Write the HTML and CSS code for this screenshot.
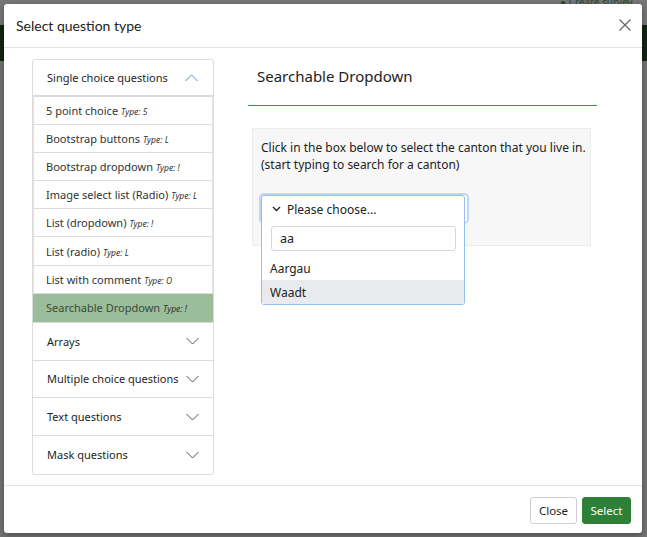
FILE: index.html
```html
<!DOCTYPE html>
<html>
<head>
<meta charset="utf-8">
<link rel="stylesheet" href="styles.css">
</head>
<body>
<div class="backdrop">
  <div class="bg-top"><span class="bg-create">● Create survey</span></div>
  <div class="bg-band"></div>
</div>
<div class="modal">
  <div class="modal-header">
    <div class="modal-title">Select question type</div>
    <svg class="close-x" width="12" height="12" viewBox="0 0 12 12"><path d="M0.5 0.5L11.5 11.5M11.5 0.5L0.5 11.5" stroke="#666" stroke-width="1.2" fill="none"/></svg>
  </div>
  <div class="modal-body">
    <div class="accordion">
      <div class="acc-head open">
        <span>Single choice questions</span>
        <svg class="chev" width="13" height="8" viewBox="0 0 13 8"><path d="M0.5 7L6.5 1L12.5 7" stroke="#4f88d8" stroke-width="1" fill="none"/></svg>
      </div>
      <div class="acc-items">
        <div class="item">5 point choice <i>Type: 5</i></div>
        <div class="item">Bootstrap buttons <i>Type: L</i></div>
        <div class="item">Bootstrap dropdown <i>Type: !</i></div>
        <div class="item">Image select list (Radio) <i>Type: L</i></div>
        <div class="item">List (dropdown) <i>Type: !</i></div>
        <div class="item">List (radio) <i>Type: L</i></div>
        <div class="item">List with comment <i>Type: O</i></div>
        <div class="item active">Searchable Dropdown <i>Type: !</i></div>
      </div>
      <div class="acc-head">
        <span>Arrays</span>
        <svg class="chev" width="13" height="8" viewBox="0 0 13 8"><path d="M0.5 1L6.5 7L12.5 1" stroke="#555" stroke-width="1" fill="none"/></svg>
      </div>
      <div class="acc-head">
        <span>Multiple choice questions</span>
        <svg class="chev" width="13" height="8" viewBox="0 0 13 8"><path d="M0.5 1L6.5 7L12.5 1" stroke="#555" stroke-width="1" fill="none"/></svg>
      </div>
      <div class="acc-head">
        <span>Text questions</span>
        <svg class="chev" width="13" height="8" viewBox="0 0 13 8"><path d="M0.5 1L6.5 7L12.5 1" stroke="#555" stroke-width="1" fill="none"/></svg>
      </div>
      <div class="acc-head last">
        <span>Mask questions</span>
        <svg class="chev" width="13" height="8" viewBox="0 0 13 8"><path d="M0.5 1L6.5 7L12.5 1" stroke="#555" stroke-width="1" fill="none"/></svg>
      </div>
    </div>
    <div class="preview">
      <div class="preview-title">Searchable Dropdown</div>
      <div class="green-line"></div>
      <div class="question">
        <div class="q-text">Click in the box below to select the canton that you live in.<br>(start typing to search for a canton)</div>
        <div class="select-wrap">
          <div class="select-box"></div>
          <div class="dropdown">
            <div class="dd-head">
              <svg width="9" height="6" viewBox="0 0 9 6"><path d="M1 1L4.5 4.5L8 1" stroke="#222" stroke-width="1.4" fill="none"/></svg>
              <span>Please choose...</span>
            </div>
            <div class="dd-search">aa</div>
            <div class="dd-opt">Aargau</div>
            <div class="dd-opt hl">Waadt</div>
          </div>
        </div>
      </div>
    </div>
  </div>
  <div class="modal-footer">
    <button class="btn btn-close">Close</button>
    <button class="btn btn-select">Select</button>
  </div>
</div>
</body>
</html>
```

FILE: styles.css
```css
html, body {
  margin: 0;
  padding: 0;
}
body {
  width: 647px;
  height: 537px;
  overflow: hidden;
  background: #737373;
  font-family: "Noto Sans", "Open Sans", sans-serif;
  position: relative;
}
.backdrop {
  position: absolute;
  left: 0;
  top: 0;
  width: 647px;
  height: 537px;
}
.bg-top {
  height: 25px;
  background: #777;
  position: relative;
}
.bg-create {
  position: absolute;
  left: 560px;
  top: -4px;
  font-size: 10px;
  line-height: 12px;
  color: #2a4a2a;
}
.bg-band {
  height: 36px;
  background: #122412;
}
.modal {
  position: absolute;
  left: 4px;
  top: 4px;
  width: 638px;
  height: 529px;
  background: #fff;
  border-radius: 3px;
  box-shadow: 0 2px 6px rgba(0,0,0,0.35);
  display: flex;
  flex-direction: column;
}
.modal-header {
  height: 43px;
  border-bottom: 1px solid #e3e3e3;
  display: flex;
  align-items: center;
  justify-content: space-between;
  padding: 0 11px 0 12px;
  flex: none;
}
.modal-title {
  font-size: 14px;
  color: #222;
  font-family: "Lato", "Noto Sans", sans-serif;
  margin-top: -1px;
}
.close-x {
  margin-top: -2px;
}
.modal-body {
  flex: 1;
  display: flex;
  padding: 11px 0 0 28px;
}
.accordion {
  width: 180px;
  border: 1px solid #dcdcdc;
  border-radius: 3px;
  flex: none;
  display: flex;
  flex-direction: column;
  align-self: flex-start;
}
.acc-head {
  height: 37.75px;
  display: flex;
  align-items: center;
  justify-content: space-between;
  padding: 0 14px 0 14px;
  font-size: 11px;
  color: #1e1e1e;
  border-bottom: 1px solid #dcdcdc;
  box-sizing: border-box;
  flex: none;
}
.acc-head.open {
  height: 37px;
  border-bottom: 2px solid #dadada;
}
.acc-head.open .chev {
  margin-right: 1px;
}
.acc-head.last {
  border-bottom: none;
}
.acc-items {
  display: flex;
  flex-direction: column;
  border-bottom: 1px solid #dcdcdc;
}
.item {
  height: 28.1px;
  box-sizing: border-box;
  border-left: 1px solid #e4e4e4;
  border-right: 1px solid #e4e4e4;
  border-bottom: 1px solid #dcdcdc;
  padding-left: 12px;
  display: flex;
  align-items: center;
  font-size: 11px;
  color: #333;
  white-space: nowrap;
  gap: 3px;
}
.item:last-child {
  border-bottom: none;
}
.item i {
  font-size: 8.5px;
  color: #333;
  margin-top: 2px;
}
.item.active {
  background: #9cbd9b;
  border-color: #9cbd9b;
  color: #3a4a3a;
}
.preview {
  margin-left: 34px;
  width: 349px;
  display: flex;
  flex-direction: column;
}
.preview-title {
  font-size: 15px;
  color: #222;
  padding-left: 9px;
  padding-top: 7px;
  height: 39px;
  box-sizing: content-box;
  flex: none;
}
.green-line {
  height: 1px;
  flex: none;
  background: #2f9a33;
}
.question {
  margin: 22px 6px 0 4px;
  background: #f7f7f7;
  border: 1px solid #ececec;
  height: 118px;
  padding: 10px 0 0 8px;
  box-sizing: border-box;
}
.q-text {
  font-size: 12px;
  line-height: 17px;
  color: #222;
  white-space: nowrap;
}
.select-wrap {
  position: relative;
  margin-top: 22px;
  height: 28px;
}
.select-box {
  width: 206px;
  height: 27px;
  border-radius: 3px;
  background: #fff;
  box-shadow: 0 0 0 2px #c0d6f5;
}
.dropdown {
  position: absolute;
  left: 0;
  top: 0;
  width: 204px;
  height: 110px;
  box-sizing: border-box;
  background: #fff;
  border: 1px solid #93bdf5;
  border-radius: 3px;
  display: flex;
  flex-direction: column;
}
.dd-head {
  height: 26px;
  display: flex;
  align-items: center;
  gap: 6px;
  padding-left: 10px;
  font-size: 12px;
  color: #222;
}
.dd-search {
  margin: 4px 8px 0 9px;
  height: 25px;
  box-sizing: border-box;
  border: 1px solid #d6d6d6;
  border-radius: 3px;
  font-size: 12.5px;
  color: #222;
  padding-left: 8px;
  display: flex;
  align-items: center;
}
.dd-opt {
  height: 24px;
  display: flex;
  align-items: center;
  padding-left: 8px;
  font-size: 12px;
  color: #222;
}
.dd-search + .dd-opt {
  margin-top: 5px;
}
.dd-opt.hl {
  background: #e8eaed;
}
.modal-footer {
  height: 47px;
  border-top: 1px solid #e3e3e3;
  display: flex;
  align-items: center;
  justify-content: flex-end;
  gap: 5px;
  padding-right: 11px;
  flex: none;
}
.btn {
  height: 27px;
  font-family: "Noto Sans", "Open Sans", sans-serif;
  font-size: 11.5px;
  border-radius: 3px;
  padding: 0 6px;
  margin-top: 1px;
}
.btn-close {
  background: #fff;
  border: 1px solid #cfcfcf;
  color: #222;
  width: 47px;
}
.btn-select {
  background: #2e8036;
  border: 1px solid #2e8036;
  color: #fff;
  width: 49px;
}
```
